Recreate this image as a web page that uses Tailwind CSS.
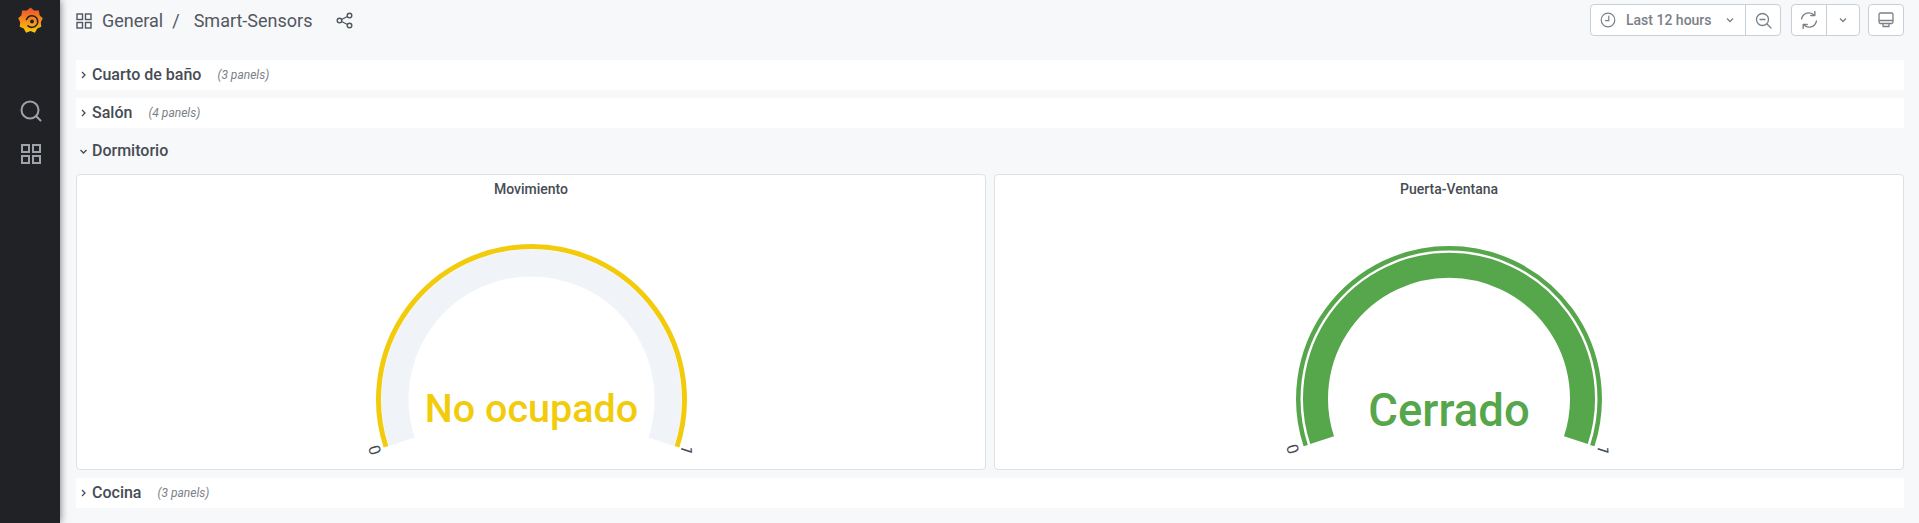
<!DOCTYPE html>
<html lang="en">
<head>
    <meta charset="UTF-8" />
    <title>Smart-Sensors - Grafana</title>
    <script src="https://cdn.jsdelivr.net/npm/@tailwindcss/browser@4"></script>
</head>
<body class="bg-[#f7f8fa] h-[523px] overflow-hidden flex font-['Roboto',sans-serif] text-[#464c54]">

<!-- Sidebar -->
<aside class="w-[60px] h-full shrink-0 bg-[#202226] shadow-[0_0_8px_rgba(0,0,0,0.55)] flex flex-col items-center">
    <svg class="mt-[7px] ml-[1px]" width="25" height="27" viewBox="0 0 25 27" fill="none">
        <defs>
            <linearGradient id="logoFill" x1="0" y1="0" x2="0" y2="1">
                <stop offset="0" stop-color="#ee4f28"/>
                <stop offset="0.5" stop-color="#f68a1e"/>
                <stop offset="1" stop-color="#fbca0a"/>
            </linearGradient>
        </defs>
        <polygon fill="url(#logoFill)" points="12.500,.5 16.100,3.600 20.900,3.500 21.600,8.250 24.800,11.300 22.800,15.300 23.300,19.750 19.250,21.500 16.900,25.700 12.500,24 8.100,25.700 5.750,21.500 1.700,19.750 2.200,15.300 .2,11.300 3.400,8.250 4.100,3.500 8.900,3.600"/>
        <path stroke="#202226" stroke-width="1.600" stroke-linecap="round" d="M8.500 12.500a5.800 5.800 0 1 1 1.500 6.300"/>
        <circle cx="14" cy="14.500" r="1.900" fill="#202226"/>
    </svg>
    <svg class="mt-[66px] ml-[1px]" width="22" height="22" viewBox="0 0 22 22" fill="none" stroke="#9ea3aa" stroke-width="2" stroke-linecap="round">
        <circle cx="10" cy="10" r="8.500"/>
        <path d="M16.500 16.500l4 4"/>
    </svg>
    <svg class="mt-[22px] ml-[1px]" width="20" height="20" viewBox="0 0 20 20" fill="none" stroke="#9ea3aa" stroke-width="2">
        <rect x="1" y="1" width="7" height="7"/>
        <rect x="12" y="1" width="7" height="7"/>
        <rect x="1" y="12" width="7" height="7"/>
        <rect x="12" y="12" width="7" height="7"/>
    </svg>
</aside>

<!-- Main content -->
<main class="grow min-w-0 pl-4 pr-[15px]">

    <!-- Top bar -->
    <header class="h-9 mt-1 mb-5 flex items-center justify-between">
        <div class="flex items-center text-lg text-[#52575f] mt-[-3px]">
            <svg width="16" height="16" viewBox="0 0 16 16" fill="none" stroke="#52575f" stroke-width="1.400" class="mr-[10px]">
                <rect x="1" y="1" width="5.500" height="5.500"/>
                <rect x="9.500" y="1" width="5.500" height="5.500"/>
                <rect x="1" y="9.500" width="5.500" height="5.500"/>
                <rect x="9.500" y="9.500" width="5.500" height="5.500"/>
            </svg>
            <span>General</span>
            <span class="ml-[9px] mr-[14px]">/</span>
            <span>Smart-Sensors</span>
            <svg class="ml-6" width="17" height="17" viewBox="0 0 17 17" fill="none" stroke="#52575f" stroke-width="1.400">
                <circle cx="3.500" cy="8.500" r="2.300"/>
                <circle cx="13.500" cy="3.500" r="2.300"/>
                <circle cx="13.500" cy="13.500" r="2.300"/>
                <path d="M5.600 7.500l5.800-3M5.600 9.500l5.800 3"/>
            </svg>
        </div>

        <div class="flex items-center h-8 mt-[-4px] text-[#7b8087]">
            <div class="flex h-full w-[191px] bg-white border border-[#c7d0d9] rounded-sm mr-[10px]">
                <div class="w-[155px] flex items-center border-r border-[#c7d0d9] pl-[9px]">
                    <svg width="16" height="16" viewBox="0 0 16 16" fill="none" stroke="#7b8087" stroke-width="1.200" stroke-linecap="round">
                        <circle cx="8" cy="8" r="6.800"/>
                        <path d="M8.800 4v4.600H5.500"/>
                    </svg>
                    <span class="ml-[10px] text-sm font-medium">Last 12 hours</span>
                    <svg class="ml-[14px]" width="8" height="6" viewBox="0 0 8 6" fill="none" stroke="#7b8087" stroke-width="1.300"><path d="M1 1.500l3 3 3-3"/></svg>
                </div>
                <div class="grow flex items-center justify-center">
                    <svg width="17" height="17" viewBox="0 0 17 17" fill="none" stroke="#7b8087" stroke-width="1.300" stroke-linecap="round">
                        <circle cx="7.500" cy="7.500" r="6"/>
                        <path d="M12 12l4 4M5 7.500h5"/>
                    </svg>
                </div>
            </div>
            <div class="flex h-full w-[69px] bg-white border border-[#c7d0d9] rounded-sm mr-2">
                <div class="w-[35px] flex items-center justify-center border-r border-[#c7d0d9]">
                    <svg width="18" height="18" viewBox="0 0 17 17" fill="none" stroke="#7b8087" stroke-width="1.300" stroke-linecap="round" stroke-linejoin="round">
                        <path d="M1.500 7.500a7 7 0 0 1 12-3.500M15.500 9.500a7 7 0 0 1-12 3.500"/>
                        <path d="M14 .500v3.800h-3.800M3 16.500v-3.800h3.800"/>
                    </svg>
                </div>
                <div class="grow flex items-center justify-center">
                    <svg width="8" height="6" viewBox="0 0 8 6" fill="none" stroke="#7b8087" stroke-width="1.300"><path d="M1 1.500l3 3 3-3"/></svg>
                </div>
            </div>
            <div class="flex items-center justify-center h-full w-9 bg-white border border-[#c7d0d9] rounded-sm">
                <svg width="16" height="16" viewBox="0 0 16 16" fill="none" stroke="#7b8087" stroke-width="1.300" stroke-linejoin="round">
                    <rect x="1" y="1" width="14" height="10.500" rx="1.500"/>
                    <path d="M1 8.500h14M5 11.500v3h6v-3"/>
                </svg>
            </div>
        </div>
    </header>

    <!-- Rows -->
    <div class="h-[30px] mb-2 bg-white flex items-center">
        <svg class="ml-[5px] mr-[6px]" width="5" height="8" viewBox="0 0 5 8" fill="none" stroke="#464c54" stroke-width="1.300"><path d="M1 1l3 3-3 3"/></svg>
        <span class="text-base font-medium">Cuarto de baño</span>
        <span class="ml-4 text-xs italic text-[#7b8087]">(3 panels)</span>
    </div>
    <div class="h-[30px] mb-2 bg-white flex items-center">
        <svg class="ml-[5px] mr-[6px]" width="5" height="8" viewBox="0 0 5 8" fill="none" stroke="#464c54" stroke-width="1.300"><path d="M1 1l3 3-3 3"/></svg>
        <span class="text-base font-medium">Salón</span>
        <span class="ml-4 text-xs italic text-[#7b8087]">(4 panels)</span>
    </div>
    <div class="h-[30px] mb-2 flex items-center">
        <svg class="ml-1 mr-[5px]" width="7" height="5" viewBox="0 0 7 5" fill="none" stroke="#464c54" stroke-width="1.300"><path d="M.5 1l3 3 3-3"/></svg>
        <span class="text-base font-medium">Dormitorio</span>
    </div>

    <!-- Gauge panels -->
    <div class="grid grid-cols-2 gap-2 mb-2">
        <section class="h-[296px] bg-white border border-[#dce1e6] rounded-sm">
            <h2 class="h-7 mb-[2px] flex items-center justify-center text-sm font-medium">Movimiento</h2>
            <svg class="w-full h-[264px]" viewBox="0 0 908 264" fill="none">
                <path stroke="#f0f3f8" stroke-width="27" d="M324.700 236.700A136.500 136.500 0 1 1 584.300 236.700"/>
                <path stroke="#f2cc0c" stroke-width="5" d="M309 241.800A153 153 0 1 1 600 241.800"/>
                <text x="454.500" y="216.700" text-anchor="middle" fill="#f2cc0c" font-size="39.500" font-weight="500">No ocupado</text>
                <text x="298" y="245" text-anchor="middle" dominant-baseline="central" fill="#464c54" font-size="16" transform="rotate(-108 298 245)">0</text>
                <text x="609.500" y="245" text-anchor="middle" dominant-baseline="central" fill="#464c54" font-size="16" transform="rotate(108 609.500 245)">1</text>
            </svg>
        </section>
        <section class="h-[296px] bg-white border border-[#dce1e6] rounded-sm">
            <h2 class="h-7 mb-[2px] flex items-center justify-center text-sm font-medium">Puerta-Ventana</h2>
            <svg class="w-full h-[264px]" viewBox="0 0 908 264" fill="none">
                <path stroke="#56a64b" stroke-width="25" d="M327.100 235.200A133.500 133.500 0 1 1 580.900 235.200"/>
                <path stroke="#56a64b" stroke-width="4.500" d="M310.700 240.600A150.700 150.700 0 1 1 597.300 240.600"/>
                <text x="454" y="220.700" text-anchor="middle" fill="#56a64b" font-size="45.500" font-weight="500">Cerrado</text>
                <text x="298" y="244" text-anchor="middle" dominant-baseline="central" fill="#464c54" font-size="16" transform="rotate(-108 298 244)">0</text>
                <text x="608" y="245" text-anchor="middle" dominant-baseline="central" fill="#464c54" font-size="16" transform="rotate(108 608 245)">1</text>
            </svg>
        </section>
    </div>

    <div class="h-[30px] bg-white flex items-center">
        <svg class="ml-[5px] mr-[6px]" width="5" height="8" viewBox="0 0 5 8" fill="none" stroke="#464c54" stroke-width="1.300"><path d="M1 1l3 3-3 3"/></svg>
        <span class="text-base font-medium">Cocina</span>
        <span class="ml-4 text-xs italic text-[#7b8087]">(3 panels)</span>
    </div>

</main>

</body>
</html>
